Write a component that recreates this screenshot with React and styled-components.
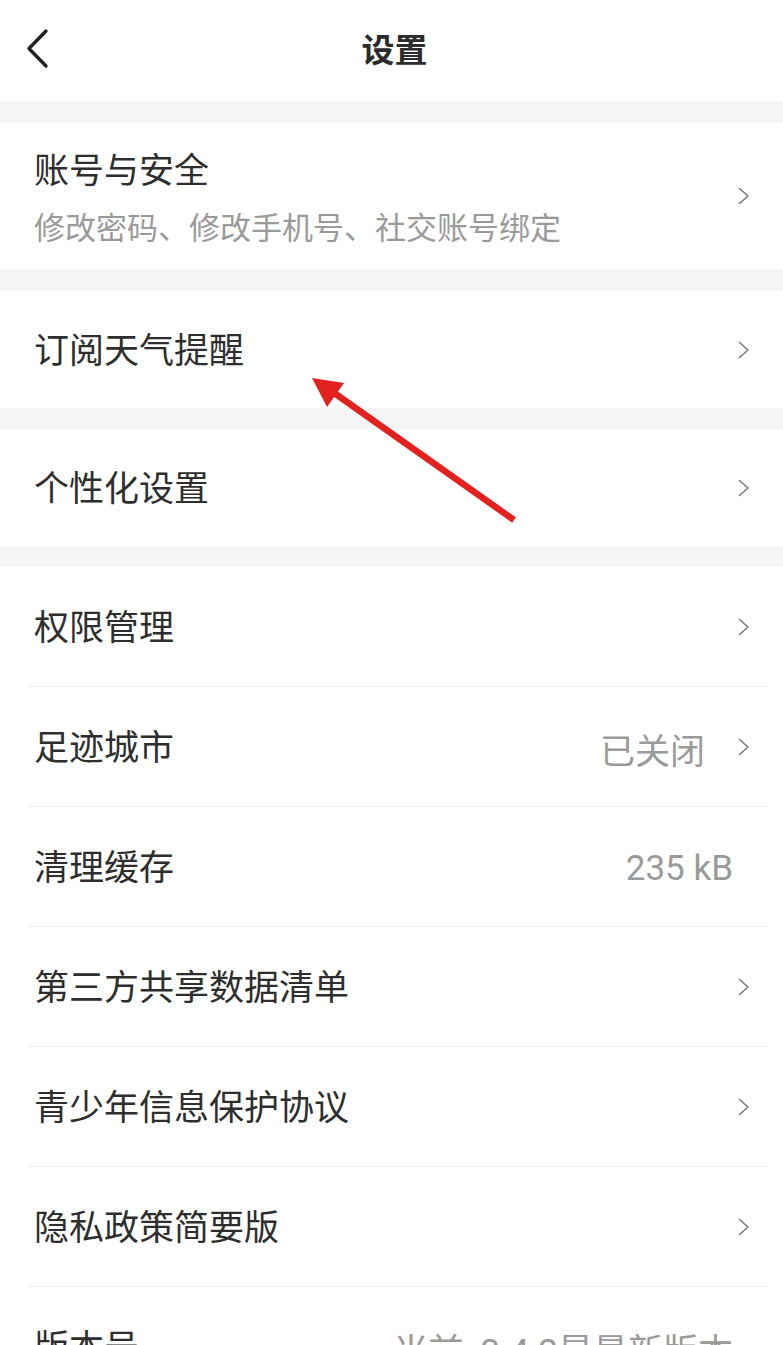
import React from 'react';
import styled, { createGlobalStyle } from 'styled-components';

const GlobalStyle = createGlobalStyle`
  html, body {
    margin: 0;
    padding: 0;
    background: #f6f6f6;
  }
  body {
    font-family: Roboto, "Noto Sans CJK SC", "Noto Sans", sans-serif;
    color: #333;
  }
`;

const Page = styled.div`
  position: relative;
  width: 783px;
  background: #f6f6f6;
`;

const Header = styled.header`
  height: 101px;
  background: #fff;
  display: flex;
  align-items: center;
  justify-content: center;
  position: relative;
`;

const BackButton = styled.button`
  position: absolute;
  left: 20px;
  top: 24px;
  width: 34px;
  height: 48px;
  border: none;
  background: transparent;
  padding: 0;
  display: flex;
  align-items: center;
  justify-content: center;
`;

const Title = styled.h1`
  margin: 0;
  font-size: 33px;
  font-weight: 700;
  color: #2b2b2b;
  transform: translate(3px, -3px);
`;

const Section = styled.section`
  background: #fff;
  margin-top: ${(p) => p.$gap || 22}px;
`;

const Row = styled.div`
  height: ${(p) => p.$height || 119}px;
  display: flex;
  align-items: center;
  padding: 0 33px 0 34px;
  box-sizing: border-box;
`;

const RowText = styled.div`
  flex: 1;
  display: flex;
  flex-direction: column;
  gap: ${(p) => (p.$sub ? 19 : 0)}px;
  padding-top: ${(p) => (p.$sub ? 8 : 4)}px;
`;

const Label = styled.div`
  font-size: 35px;
  line-height: 38px;
  color: #2e2e2e;
`;

const SubLabel = styled.div`
  font-size: 31px;
  line-height: 38px;
  color: #9a9a9a;
`;

const Value = styled.span`
  font-size: 35px;
  color: #9a9a9a;
  padding-top: 3px;
  margin-right: ${(p) => (p.$arrow ? 33 : 17)}px;
`;

const Divider = styled.div`
  height: 1px;
  background: #f1f1f1;
  margin: 0 15px 0 28px;
`;

const Arrow = styled.svg`
  position: absolute;
  left: 0;
  top: 0;
  pointer-events: none;
`;

const Chevron = () => (
  <svg width="12" height="18" viewBox="0 0 12 18">
    <polyline points="1.5,1.5 10,9 1.5,16.5" fill="none" stroke="#7a7a7a" strokeWidth="1.6" strokeLinecap="round" strokeLinejoin="round" />
  </svg>
);

const listRows = [
  { label: '权限管理', arrow: true },
  { label: '足迹城市', value: '已关闭', arrow: true },
  { label: '清理缓存', value: '235 kB' },
  { label: '第三方共享数据清单', arrow: true },
  { label: '青少年信息保护协议', arrow: true },
  { label: '隐私政策简要版', arrow: true },
  { label: '版本号', value: '当前v3.4.2是最新版本' },
];

export default function App() {
  return (
    <Page>
      <GlobalStyle />
      <Header>
        <BackButton>
          <svg width="26" height="42" viewBox="0 0 26 42">
            <polyline points="22,4 5,21.5 22,39" fill="none" stroke="#222" strokeWidth="3.4" strokeLinecap="round" strokeLinejoin="round" />
          </svg>
        </BackButton>
        <Title>设置</Title>
      </Header>

      <Section $gap={22}>
        <Row $height={146}>
          <RowText $sub>
            <Label>账号与安全</Label>
            <SubLabel>修改密码、修改手机号、社交账号绑定</SubLabel>
          </RowText>
          <Chevron />
        </Row>
      </Section>

      <Section $gap={22}>
        <Row $height={117}>
          <RowText>
            <Label>订阅天气提醒</Label>
          </RowText>
          <Chevron />
        </Row>
      </Section>

      <Section $gap={22}>
        <Row $height={116}>
          <RowText>
            <Label>个性化设置</Label>
          </RowText>
          <Chevron />
        </Row>
      </Section>

      <Section $gap={21}>
        {listRows.map((r, i) => (
          <React.Fragment key={r.label}>
            {i > 0 && <Divider />}
            <Row $height={119}>
              <RowText>
                <Label>{r.label}</Label>
              </RowText>
              {r.value && <Value $arrow={r.arrow}>{r.value}</Value>}
              {r.arrow && <Chevron />}
            </Row>
          </React.Fragment>
        ))}
      </Section>

      <Arrow width="783" height="600" viewBox="0 0 783 600">
        <line x1="514" y1="520" x2="330" y2="390" stroke="#e3211f" strokeWidth="6.5" />
        <polygon points="312,378 344,383 327,407" fill="#e3211f" />
      </Arrow>
    </Page>
  );
}
